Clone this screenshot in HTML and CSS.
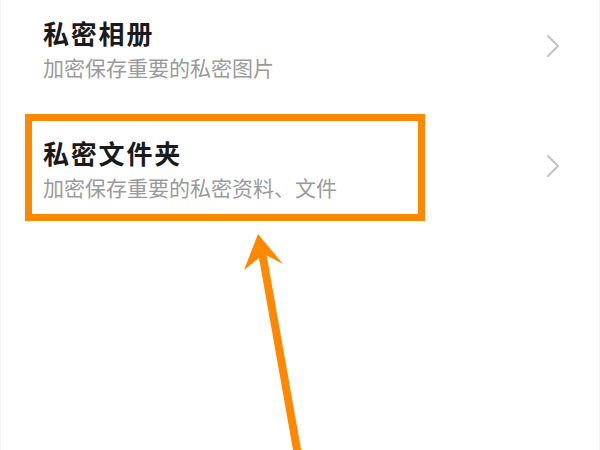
FILE: index.html
```html
<!DOCTYPE html>
<html lang="zh-CN">
<head>
<meta charset="utf-8">
<link rel="stylesheet" href="styles.css">
</head>
<body>
<div class="page">
  <ul class="list">
    <li class="item">
      <div class="text">
        <div class="title">私密相册</div>
        <div class="sub">加密保存重要的私密图片</div>
      </div>
      <svg class="chev" width="14" height="24" viewBox="0 0 14 24"><path d="M2 2 L12 12 L2 22" fill="none" stroke="#c4c4c4" stroke-width="2" stroke-linecap="round" stroke-linejoin="round"/></svg>
    </li>
    <li class="item">
      <div class="text">
        <div class="title">私密文件夹</div>
        <div class="sub">加密保存重要的私密资料、文件</div>
      </div>
      <svg class="chev" width="14" height="24" viewBox="0 0 14 24"><path d="M2 2 L12 12 L2 22" fill="none" stroke="#c4c4c4" stroke-width="2" stroke-linecap="round" stroke-linejoin="round"/></svg>
    </li>
  </ul>
  <svg class="annot" width="600" height="450" viewBox="0 0 600 450">
    <rect x="27.5" y="117.5" width="393" height="100" fill="none" stroke="#ff8800" stroke-width="7"/>
    <line x1="261" y1="252" x2="297" y2="455" stroke="#ff8800" stroke-width="8"/>
    <polygon points="257,234 282,264 263,254 243,270" fill="#ff8800"/>
  </svg>
</div>
</body>
</html>
```
FILE: styles.css
```css
html, body {
  margin: 0;
  padding: 0;
  background: #ffffff;
}
.page {
  position: relative;
  width: 600px;
  height: 450px;
  overflow: hidden;
  font-family: "Noto Sans CJK SC", "Noto Sans", sans-serif;
  border-left: 1px solid #f2f2f2;
  border-right: 1px solid #f2f2f2;
  box-sizing: border-box;
}
.list {
  list-style: none;
  margin: 0;
  padding: 0;
}
.item {
  height: 120px;
  box-sizing: border-box;
  padding: 17px 39px 0 42px;
  display: flex;
  justify-content: space-between;
  align-items: flex-start;
}
.text {
  display: flex;
  flex-direction: column;
  gap: 5px;
}
.title {
  font-size: 26px;
  line-height: 32px;
  font-weight: 700;
  color: #1a1a1a;
  letter-spacing: 1.8px;
}
.sub {
  font-size: 21px;
  line-height: 26px;
  color: #9a9a9a;
  letter-spacing: 0;
}
.chev {
  margin-top: 17px;
}
.annot {
  position: absolute;
  left: 0;
  top: 0;
}
```
